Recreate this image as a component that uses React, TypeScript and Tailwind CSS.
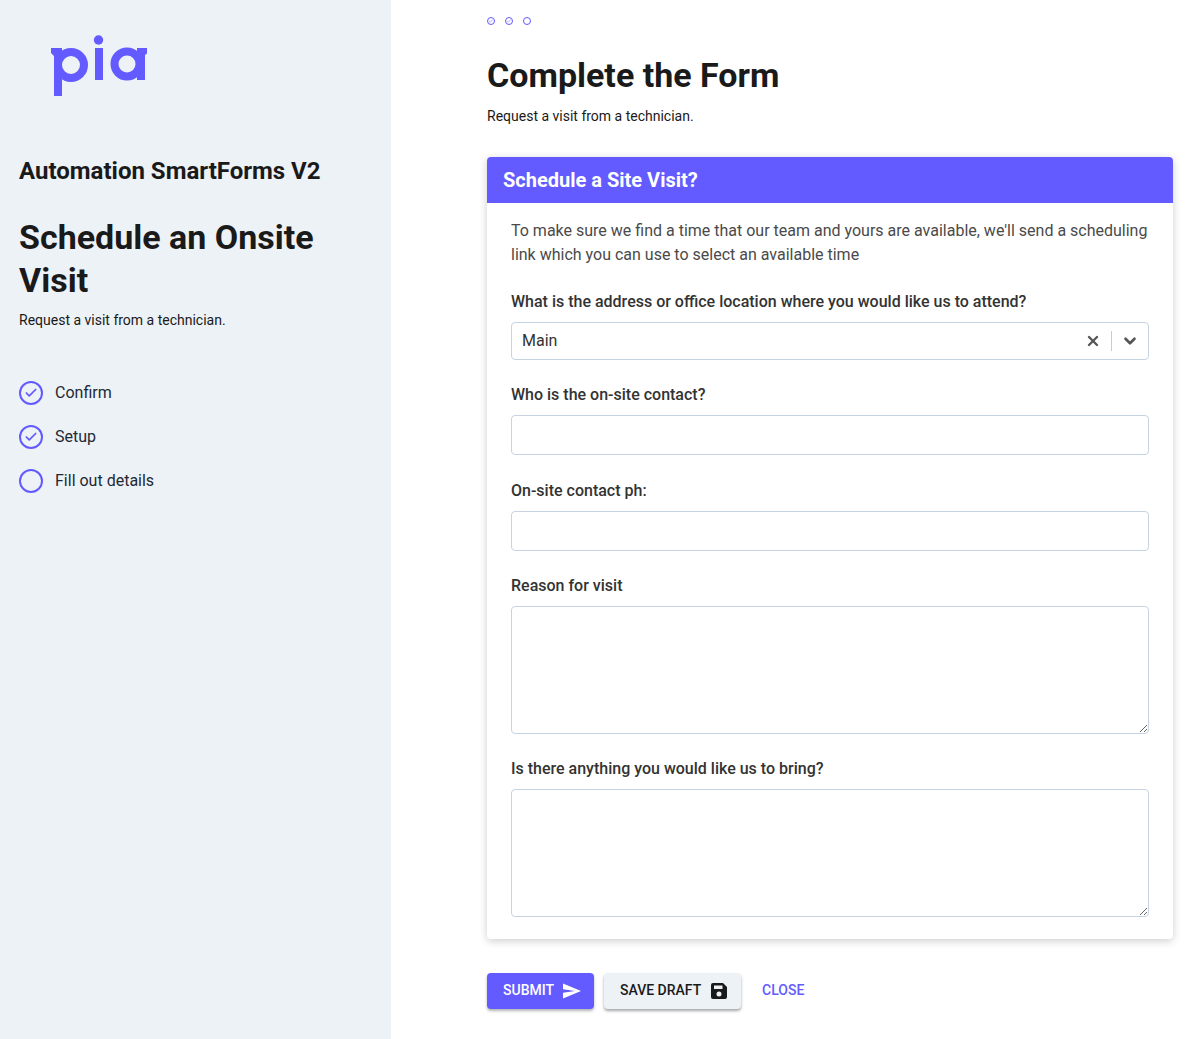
import { Check, ChevronDown, X } from "lucide-react";

const font = { fontFamily: "Roboto, sans-serif" };

function PiaLogo() {
  return (
    <svg width="100" height="64" viewBox="0 0 100 64" fill="none" className="block">
      {/* p */}
      <path d="M0 16h10v5H8.500V64H3V24L0 21z" fill="#635bff" />
      <path d="M3 16h8v48H3z" fill="#635bff" />
      <circle cx="20" cy="33" r="13" stroke="#635bff" strokeWidth="8" />
      {/* i */}
      <rect x="44" y="16" width="8" height="32" fill="#635bff" />
      <circle cx="47.500" cy="8" r="4.700" fill="#635bff" />
      {/* a */}
      <circle cx="76" cy="32" r="12.500" stroke="#635bff" strokeWidth="8" />
      <path d="M86 16h10v5.500l-2 1.500v25h-8z" fill="#635bff" />
    </svg>
  );
}

function Step({ label, done }: { label: string; done: boolean }) {
  return (
    <div className="flex items-center h-6 gap-3">
      <span className="w-6 h-6 rounded-full border-2 border-[#635bff] flex items-center justify-center">
        {done && <Check className="w-[14px] h-[14px] text-[#635bff]" strokeWidth={3} />}
      </span>
      <span className="text-base text-[#1f2933]">{label}</span>
    </div>
  );
}

function Dot({ done }: { done: boolean }) {
  return (
    <span className="w-2 h-2 rounded-full border border-[#635bff] flex items-center justify-center">
      {done && <Check className="w-[6px] h-[6px] text-[#b5b1ff]" strokeWidth={4} />}
    </span>
  );
}

function Label({ children }: { children: string }) {
  return <label className="block text-base font-medium leading-6 text-[#333]">{children}</label>;
}

const inputCls = "block w-full rounded border border-[#c5d3e2] bg-white outline-none";

export default function App() {
  return (
    <div className="flex min-h-[1039px] bg-white overflow-hidden" style={font}>
      <aside className="w-[391px] shrink-0 bg-[#edf2f7] pl-[19px]">
        <div className="pl-[32px] pt-[32px]">
          <PiaLogo />
        </div>
        <h2 className="mt-[59px] text-2xl leading-8 font-bold text-[#1a1a1a]">Automation SmartForms V2</h2>
        <h1 className="mt-[29px] text-[34px] leading-[42.500px] font-bold text-[#1a1a1a] w-[340px]">
          Schedule an Onsite Visit
        </h1>
        <p className="mt-[9px] text-sm leading-5 text-[#1a1a1a]">Request a visit from a technician.</p>
        <div className="mt-[51px] flex flex-col gap-5">
          <Step label="Confirm" done />
          <Step label="Setup" done />
          <Step label="Fill out details" done={false} />
        </div>
      </aside>

      <main className="w-[686px] ml-[96px] shrink-0">
        <div className="flex gap-[10px] pt-[17px]">
          <Dot done />
          <Dot done />
          <Dot done={false} />
        </div>
        <h1 className="mt-[28px] text-[34px] leading-[44px] font-bold text-[#1a1a1a]">Complete the Form</h1>
        <p className="mt-[9px] text-sm leading-5 text-[#1a1a1a]">Request a visit from a technician.</p>

        <section className="mt-[31px] rounded bg-white shadow-[0_2px_8px_rgba(0,0,0,0.2)]">
          <div className="h-[46px] rounded-t bg-[#635bff] px-4 flex items-center">
            <h3 className="text-xl font-bold text-white">Schedule a Site Visit?</h3>
          </div>
          <div className="px-6 pt-4 pb-[22px]">
            <p className="text-base leading-6 text-[#4a4a4a]">
              To make sure we find a time that our team and yours are available, we'll send a scheduling link which
              you can use to select an available time
            </p>

            <div className="mt-[23px]">
              <Label>What is the address or office location where you would like us to attend?</Label>
              <div className={`${inputCls} mt-2 h-[38px] flex items-center pl-[10px] text-base text-[#333]`}>
                <span className="flex-1">Main</span>
                <X className="w-4 h-4 mr-[-1px] text-[#555]" strokeWidth={3.5} />
                <span className="w-px h-5 bg-[#ccc] ml-[11px] mr-[9px]" />
                <ChevronDown className="w-[18px] h-[18px] mr-[9px] text-[#555]" strokeWidth={3.5} />
              </div>
            </div>

            <div className="mt-[23px]">
              <Label>Who is the on-site contact?</Label>
              <input className={`${inputCls} mt-2 h-10`} />
            </div>

            <div className="mt-6">
              <Label>On-site contact ph:</Label>
              <input className={`${inputCls} mt-2 h-10`} />
            </div>

            <div className="mt-[23px]">
              <Label>Reason for visit</Label>
              <textarea className={`${inputCls} mt-2 h-32`} />
            </div>

            <div className="mt-[23px]">
              <Label>Is there anything you would like us to bring?</Label>
              <textarea className={`${inputCls} mt-2 h-32`} />
            </div>
          </div>
        </section>

        <div className="mt-[34px] flex items-center">
          <button className="h-9 w-[107px] pb-[2px] rounded bg-[#635bff] text-white text-sm font-medium flex items-center pl-4 gap-[9px] shadow-[0_2px_3px_rgba(0,0,0,0.3)]">
            SUBMIT
            <svg width="18" height="16" viewBox="0 0 18 16" fill="currentColor" className="mt-[1px]">
              <path d="M0 0.500 18 8 0 15.500V9.700L12 8 0 6.300z" />
            </svg>
          </button>
          <button className="ml-[10px] h-9 w-[137px] pb-[2px] rounded bg-[#edf2f7] text-[#1a1a1a] text-sm font-medium flex items-center pl-4 gap-[10px] shadow-[0_2px_3px_rgba(0,0,0,0.35)]">
            SAVE DRAFT
            <svg width="16" height="16" viewBox="0 0 16 16" fill="currentColor" className="mt-[1px]">
              <path
                fillRule="evenodd"
                d="M2 0h10l4 4v10a2 2 0 0 1-2 2H2a2 2 0 0 1-2-2V2a2 2 0 0 1 2-2zm1 2.500v3.500h8.500V2.500zm5 6a2.500 2.500 0 1 0 0 5 2.500 2.500 0 0 0 0-5z"
              />
            </svg>
          </button>
          <button className="ml-[21px] pb-[2px] text-sm font-medium text-[#635bff]">CLOSE</button>
        </div>
      </main>
    </div>
  );
}
